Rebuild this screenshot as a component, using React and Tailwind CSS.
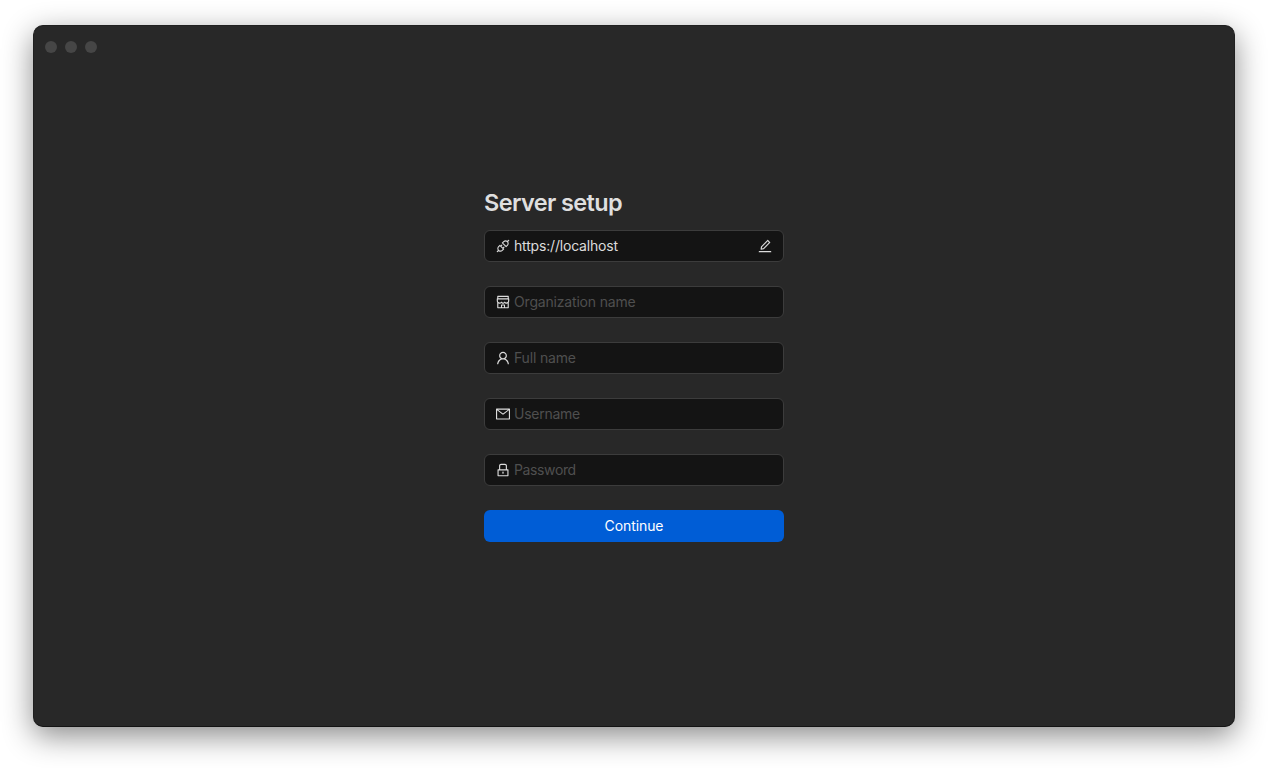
import React from "react";
import { AiOutlineApi, AiOutlineShop, AiOutlineUser, AiOutlineMail, AiOutlineLock, AiOutlineEdit } from "react-icons/ai";

const fields = [
  { icon: AiOutlineShop, label: "Organization name", type: "text", tracking: "tracking-[-0.18px]" },
  { icon: AiOutlineUser, label: "Full name", type: "text", tracking: "tracking-[-0.18px]" },
  { icon: AiOutlineMail, label: "Username", type: "text", tracking: "tracking-[-0.25px]" },
  { icon: AiOutlineLock, label: "Password", type: "password", tracking: "tracking-[-0.38px]" },
];

function Icon({ as: Glyph }) {
  return <Glyph viewBox="64 64 896 896" className="size-[14px] shrink-0" />;
}

function Field({ children }) {
  return (
    <div className="flex h-8 items-center gap-1 rounded-md border border-[#3c3c3c] bg-[#141414] px-[11px] text-[#dcdcdc]">
      {children}
    </div>
  );
}

export default function App() {
  return (
    <div className="h-[768px] w-[1268px] overflow-hidden bg-white px-[33px] pt-[25px] font-['Inter',sans-serif]">
      <main className="h-[702px] w-[1202px] rounded-[10px] border border-[#202020] border-b-[#141414] bg-[#282828] px-[11px] pt-[15px] shadow-[0_9px_30px_rgba(0,0,0,0.46)]">
        <div className="flex gap-2">
          <span className="size-3 rounded-full bg-[#464646]" />
          <span className="size-3 rounded-full bg-[#464646]" />
          <span className="size-3 rounded-full bg-[#464646]" />
        </div>
        <form className="mx-auto mt-[134px] w-[300px] text-[14px]">
          <h1 className="mb-[11px] text-[23.5px] leading-8 font-semibold tracking-[-0.62px] text-[#dfdfdf]">Server setup</h1>
          <div className="flex flex-col gap-6">
            <Field>
              <Icon as={AiOutlineApi} />
              <span className="grow pb-0.5 tracking-[-0.18px]">https://localhost</span>
              <Icon as={AiOutlineEdit} />
            </Field>
            {fields.map(({ icon, label, type, tracking }) => (
              <Field key={label}>
                <Icon as={icon} />
                <input
                  type={type}
                  placeholder={label}
                  className={`min-w-0 grow bg-transparent pb-0.5 outline-none placeholder:text-[#4f4f4f] ${tracking}`}
                />
              </Field>
            ))}
            <button type="button" className="h-8 rounded-md bg-[#005dd6] pb-0.5 tracking-[-0.1px] text-white">
              Continue
            </button>
          </div>
        </form>
      </main>
    </div>
  );
}
